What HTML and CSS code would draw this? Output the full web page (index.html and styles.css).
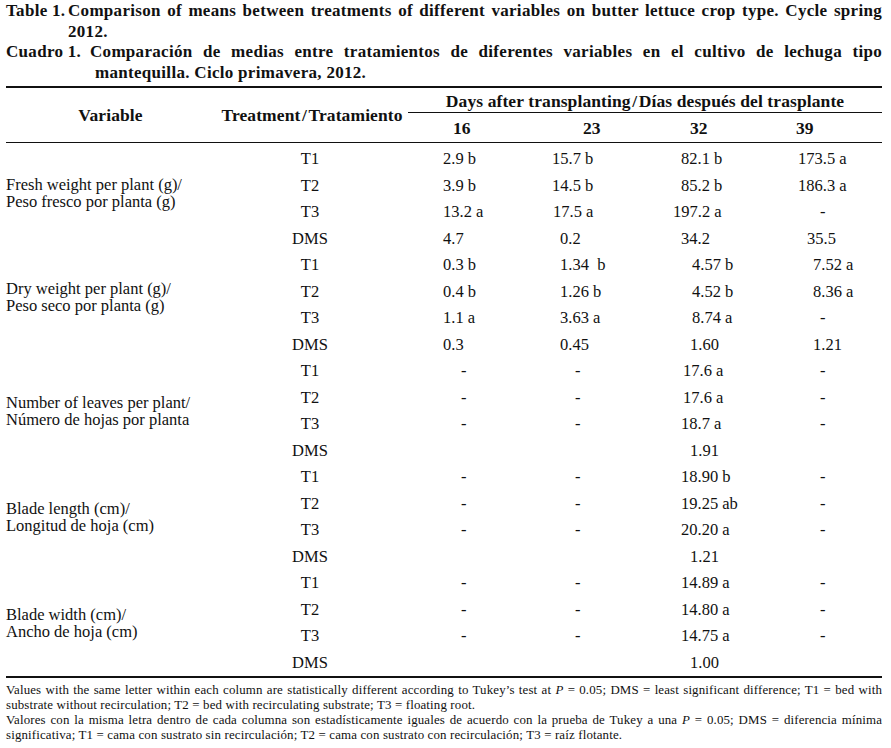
FILE: index.html
```
<!DOCTYPE html>
<html lang="en">
<head>
<meta charset="utf-8">
<title>Table 1</title>
<link rel="stylesheet" href="styles.css">
</head>
<body>
<div class="page">
  <div class="caption">
    <div class="cap"><span class="lbl lbl-en">Table 1.</span><span class="ctext">Comparison of means between treatments of different variables on butter lettuce crop type. Cycle spring 2012.</span></div>
    <div class="cap"><span class="lbl lbl-es">Cuadro 1.</span><span class="ctext">Comparación de medias entre tratamientos de diferentes variables en el cultivo de lechuga tipo <span class="indent">mantequilla. Ciclo primavera, 2012.</span></span></div>
  </div>

  <div class="table">
    <div class="thead">
      <div class="h-var">Variable</div>
      <div class="h-trt">Treatment&#8202;/&#8202;Tratamiento</div>
      <div class="h-days">Days after transplanting&#8202;/&#8202;Días después del trasplante</div>
      <div class="hn c1 o10">16</div>
      <div class="hn c2 o31">23</div>
      <div class="hn c3 o17">32</div>
      <div class="hn c4 o-2">39</div>
    </div>

    <div class="tbody">
      <div class="group">
        <div class="var up6">Fresh weight per plant (g)/<br>Peso fresco por planta (g)</div>
        <div class="trt">T1</div><div class="c1">2.9 b</div><div class="c2">15.7 b</div><div class="c3 o8">82.1 b</div><div class="c4">173.5 a</div>
        <div class="trt">T2</div><div class="c1">3.9 b</div><div class="c2">14.5 b</div><div class="c3 o8">85.2 b</div><div class="c4">186.3 a</div>
        <div class="trt">T3</div><div class="c1">13.2 a</div><div class="c2 o1">17.5 a</div><div class="c3">197.2 a</div><div class="c4 o22">-</div>
        <div class="trt">DMS</div><div class="c1">4.7</div><div class="c2 o8">0.2</div><div class="c3 o8">34.2</div><div class="c4 o9">35.5</div>
      </div>

      <div class="group">
        <div class="var up10">Dry weight per plant (g)/<br>Peso seco por planta (g)</div>
        <div class="trt">T1</div><div class="c1">0.3 b</div><div class="c2 o8">1.34&nbsp; b</div><div class="c3 o19">4.57 b</div><div class="c4 o15">7.52 a</div>
        <div class="trt">T2</div><div class="c1">0.4 b</div><div class="c2 o8">1.26 b</div><div class="c3 o19">4.52 b</div><div class="c4 o15">8.36 a</div>
        <div class="trt">T3</div><div class="c1">1.1 a</div><div class="c2 o8">3.63 a</div><div class="c3 o19">8.74 a</div><div class="c4 o22">-</div>
        <div class="trt">DMS</div><div class="c1">0.3</div><div class="c2 o8">0.45</div><div class="c3 o17">1.60</div><div class="c4 o15">1.21</div>
      </div>

      <div class="group">
        <div class="var">Number of leaves per plant/<br>Número de hojas por planta</div>
        <div class="trt">T1</div><div class="c1 o18">-</div><div class="c2 o23">-</div><div class="c3 o10">17.6 a</div><div class="c4 o22">-</div>
        <div class="trt">T2</div><div class="c1 o18">-</div><div class="c2 o23">-</div><div class="c3 o10">17.6 a</div><div class="c4 o22">-</div>
        <div class="trt">T3</div><div class="c1 o18">-</div><div class="c2 o23">-</div><div class="c3 o8">18.7 a</div><div class="c4 o22">-</div>
        <div class="trt">DMS</div><div class="c1"></div><div class="c2"></div><div class="c3 o17">1.91</div><div class="c4"></div>
      </div>

      <div class="group">
        <div class="var">Blade length (cm)/<br>Longitud de hoja (cm)</div>
        <div class="trt">T1</div><div class="c1 o18">-</div><div class="c2 o23">-</div><div class="c3 o8">18.90 b</div><div class="c4 o22">-</div>
        <div class="trt">T2</div><div class="c1 o18">-</div><div class="c2 o23">-</div><div class="c3 o8">19.25 ab</div><div class="c4 o22">-</div>
        <div class="trt">T3</div><div class="c1 o18">-</div><div class="c2 o23">-</div><div class="c3 o8">20.20 a</div><div class="c4 o22">-</div>
        <div class="trt">DMS</div><div class="c1"></div><div class="c2"></div><div class="c3 o17">1.21</div><div class="c4"></div>
      </div>

      <div class="group">
        <div class="var">Blade width (cm)/<br>Ancho de hoja (cm)</div>
        <div class="trt">T1</div><div class="c1 o18">-</div><div class="c2 o23">-</div><div class="c3 o8">14.89 a</div><div class="c4 o22">-</div>
        <div class="trt">T2</div><div class="c1 o18">-</div><div class="c2 o23">-</div><div class="c3 o8">14.80 a</div><div class="c4 o22">-</div>
        <div class="trt">T3</div><div class="c1 o18">-</div><div class="c2 o23">-</div><div class="c3 o8">14.75 a</div><div class="c4 o22">-</div>
        <div class="trt">DMS</div><div class="c1"></div><div class="c2"></div><div class="c3 o17">1.00</div><div class="c4"></div>
      </div>
    </div>
  </div>

  <div class="notes">
    <p>Values with the same letter within each column are statistically different according to Tukey’s test at <i>P</i> = 0.05; DMS = least significant difference; T1 = bed with substrate without recirculation; T2 = bed with recirculating substrate; T3 = floating root.</p>
    <p>Valores con la misma letra dentro de cada columna son estadísticamente iguales de acuerdo con la prueba de Tukey a una <i>P</i> = 0.05; DMS = diferencia mínima significativa; T1 = cama con sustrato sin recirculación; T2 = cama con sustrato con recirculación; T3 = raíz flotante.</p>
  </div>
</div>
</body>
</html>
```

FILE: styles.css
```
html, body {
  margin: 0;
  padding: 0;
  background: #ffffff;
}

body {
  font-family: "Liberation Serif", "Times New Roman", serif;
  color: #111111;
}

.page {
  padding: 0 9px 0 6px;
}

/* Caption */
.caption {
  padding-top: 1px;
  margin-bottom: 3px;
  font-weight: bold;
  font-size: 17px;
  letter-spacing: 0.3px;
  line-height: 20.5px;
}

.cap {
  display: flex;
}

.lbl {
  flex: none;
  white-space: nowrap;
}

.lbl-en { width: 62px; }
.lbl-es { width: 84px; }

.ctext {
  flex: 1;
  text-align: justify;
}

.indent {
  padding-left: 5px;
}

/* Table */
.thead,
.group {
  display: grid;
  grid-template-columns: 209px 190px 147px 121px 125px 84px;
}

.thead {
  grid-template-rows: 25px 29px;
  border-top: 2px solid #111111;
  border-bottom: 1px solid #111111;
  font-weight: bold;
  font-size: 17.5px;
  letter-spacing: 0.1px;
}

.h-var,
.h-trt {
  grid-row: 1 / 3;
  align-self: center;
  text-align: center;
  padding-top: 1px;
}

.h-var { grid-column: 1; }
.h-trt { grid-column: 2; padding-left: 4px; }

.h-days {
  grid-row: 1;
  grid-column: 3 / 7;
  margin-left: 3px;
  border-bottom: 1px solid #111111;
  text-align: center;
  display: flex;
  align-items: center;
  justify-content: center;
  padding-top: 3px;
}

.hn {
  grid-row: 2;
  display: flex;
  align-items: center;
  padding-top: 1px;
}

.thead .c1 { grid-column: 3; }
.thead .c2 { grid-column: 4; }
.thead .c3 { grid-column: 5; }
.thead .c4 { grid-column: 6; }

.tbody {
  padding-top: 3px;
  border-bottom: 2px solid #111111;
  font-size: 16.5px;
}

.group {
  grid-template-rows: repeat(4, 26.5px);
}

.var {
  grid-column: 1;
  grid-row: 1 / 5;
  align-self: center;
  line-height: 17px;
  white-space: nowrap;
}

.up6 { margin-bottom: 13px; }
.up10 { margin-bottom: 16px; }

.trt {
  grid-column: 2;
  text-align: center;
  align-self: center;
}

.c1, .c2, .c3, .c4 {
  align-self: center;
  white-space: nowrap;
}

.c1 { padding-left: 38px; }

/* offsets inside cells */
.o-2 { text-indent: -2px; }
.o1 { text-indent: 1px; }
.o8 { text-indent: 8px; }
.o9 { text-indent: 9px; }
.o10 { text-indent: 10px; }
.o15 { text-indent: 15px; }
.o17 { text-indent: 17px; }
.o18 { text-indent: 18px; }
.o19 { text-indent: 19px; }
.o22 { text-indent: 22px; }
.o23 { text-indent: 23px; }
.o31 { text-indent: 31px; }

.hn.o10 { padding-left: 48px; text-indent: 0; }
.hn.o31 { padding-left: 31px; text-indent: 0; }
.hn.o17 { padding-left: 17px; text-indent: 0; }
.hn.o-2 { padding-left: 0; margin-left: -2px; text-indent: 0; }

/* Footnotes */
.notes {
  margin-top: 5px;
  font-size: 12.9px;
  letter-spacing: 0.15px;
  line-height: 14.9px;
}

.notes p {
  margin: 0;
  text-align: justify;
}
```
